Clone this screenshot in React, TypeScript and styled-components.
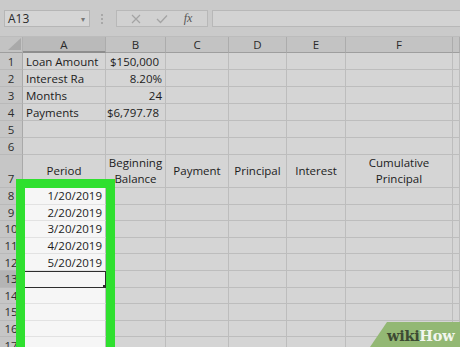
import React from "react";
import styled, { createGlobalStyle } from "styled-components";

const GlobalStyle = createGlobalStyle`
  body {
    margin: 0;
    background: #cfcfcf;
    font-family: "Open Sans", "Liberation Sans", sans-serif;
  }
`;

type Align = "left" | "right" | "center";

type CellData = {
  text?: string;
  align?: Align;
  pad?: number;
};

const columns = ["A", "B", "C", "D", "E", "F", ""];
const colWidths = "23px 83px 60px 63px 58px 59px 107px 1fr";

const topRows: CellData[][] = [
  [{ text: "Loan Amount" }, { text: "$150,000", align: "right", pad: 6 }],
  [{ text: "Interest Ra" }, { text: "8.20%", align: "right" }],
  [{ text: "Months" }, { text: "24", align: "right" }],
  [{ text: "Payments" }, { text: "$6,797.78", align: "right", pad: 6 }],
  [],
  [],
];

const headings = ["Period", "Beginning\nBalance", "Payment", "Principal", "Interest", "Cumulative\nPrincipal", ""];

const dates = ["1/20/2019", "2/20/2019", "3/20/2019", "4/20/2019", "5/20/2019", "", "", "", "", ""];

export default function App() {
  return (
    <Page>
      <GlobalStyle />
      <Toolbar>
        <NameBox>
          <span>A13</span>
          <Caret>▾</Caret>
        </NameBox>
        <Grip>
          <i />
          <i />
          <i />
        </Grip>
        <ButtonBox>
          <ToolIcon>
            <svg width="10" height="10" viewBox="0 0 10 10">
              <path d="M1 1 L9 9 M9 1 L1 9" stroke="#a4a4a4" strokeWidth="1.2" />
            </svg>
          </ToolIcon>
          <ToolIcon>
            <svg width="12" height="10" viewBox="0 0 12 10">
              <path d="M1 5 L4.5 8.5 L11 1.5" stroke="#a4a4a4" strokeWidth="1.3" fill="none" />
            </svg>
          </ToolIcon>
          <Fx>fx</Fx>
        </ButtonBox>
        <FormulaInput />
      </Toolbar>

      <Sheet>
        <Corner>
          <svg width="13" height="12" viewBox="0 0 13 12">
            <path d="M13 0 L13 12 L0 12 Z" fill="#a9a9a9" />
          </svg>
        </Corner>
        {columns.map((c, i) => (
          <ColHeader key={"h" + i} $active={c === "A"}>
            {c}
          </ColHeader>
        ))}

        {topRows.map((row, r) => (
          <React.Fragment key={"r" + r}>
            <RowHeader>{r + 1}</RowHeader>
            {columns.map((_, c) => {
              const cell = row[c];
              return (
                <Cell key={c} $align={cell?.align ?? "left"} $pad={cell?.pad ?? 3}>
                  {cell?.text}
                </Cell>
              );
            })}
          </React.Fragment>
        ))}

        <RowHeader $tall>7</RowHeader>
        {headings.map((h, c) => (
          <HeadCell key={"t" + c}>{h}</HeadCell>
        ))}

        {dates.map((d, r) => (
          <React.Fragment key={"d" + r}>
            <RowHeader $active={r + 8 === 13}>{r + 8}</RowHeader>
            {columns.map((_, c) =>
              c === 0 ? (
                <Cell key={c} $align="right" $pad={3} $white $selected={r + 8 === 13}>
                  {d}
                  {r + 8 === 13 && <Handle />}
                </Cell>
              ) : (
                <Cell key={c} $align="left" $pad={3} />
              )
            )}
          </React.Fragment>
        ))}
      </Sheet>

      <Highlight />

      <Logo>
        <svg width="90" height="25" viewBox="0 0 90 25">
          <path d="M17 0 L90 0 L90 25 L0 25 Z" fill="#93b874" />
        </svg>
        <LogoText>
          <Wiki>wiki</Wiki>
          <How>How</How>
        </LogoText>
      </Logo>
    </Page>
  );
}

const Page = styled.div`
  position: relative;
  width: 460px;
  height: 347px;
  overflow: hidden;
  background: #d4d4d4;
`;

const Toolbar = styled.div`
  display: flex;
  align-items: flex-start;
  height: 37px;
  box-sizing: border-box;
  padding: 10px 0 0 4px;
  background: #cacaca;
  border-bottom: 1px solid #bcbcbc;
`;

const NameBox = styled.div`
  display: flex;
  align-items: center;
  justify-content: space-between;
  box-sizing: border-box;
  width: 86px;
  height: 17px;
  padding: 0 4px 0 3px;
  background: #d5d5d5;
  border: 1px solid #b6b6b6;
  font-size: 12px;
  color: #2a2a2a;
`;

const Caret = styled.span`
  font-size: 8px;
  color: #777;
`;

const Grip = styled.div`
  display: flex;
  flex-direction: column;
  gap: 2px;
  margin: 4px 13px 0 11px;

  i {
    display: block;
    width: 2px;
    height: 2px;
    background: #a8a8a8;
  }
`;

const ButtonBox = styled.div`
  display: flex;
  align-items: center;
  justify-content: space-around;
  box-sizing: border-box;
  width: 92px;
  height: 17px;
  padding: 0 6px;
  background: #d1d1d1;
  border: 1px solid #b8b8b8;
`;

const ToolIcon = styled.span`
  display: flex;
  width: 20px;
  justify-content: center;
`;

const Fx = styled.span`
  width: 20px;
  text-align: center;
  font-family: "Liberation Serif", serif;
  font-style: italic;
  font-size: 12px;
  color: #555;
`;

const FormulaInput = styled.div`
  flex: 1;
  height: 17px;
  margin-left: 4px;
  box-sizing: border-box;
  background: #d3d3d3;
  border: 1px solid #b8b8b8;
  border-right: none;
`;

const Sheet = styled.div`
  display: grid;
  grid-template-columns: ${colWidths};
  grid-template-rows: 16px repeat(6, 17px) 33px repeat(10, 16.6px);
  font-size: 11.5px;
  color: #1c1c1c;
`;

const Corner = styled.div`
  display: flex;
  align-items: flex-end;
  justify-content: flex-end;
  padding: 0 1px 2px 0;
  background: #c3c3c3;
  border-right: 1px solid #b0b0b0;
  border-bottom: 1px solid #9e9e9e;
`;

const ColHeader = styled.div<{ $active?: boolean }>`
  display: flex;
  align-items: center;
  justify-content: center;
  box-sizing: border-box;
  background: ${(p) => (p.$active ? "#bababa" : "#c3c3c3")};
  border-right: 1px solid #acacac;
  border-bottom: ${(p) => (p.$active ? "2px solid #8e8e8e" : "1px solid #9e9e9e")};
  font-size: 11.5px;
  color: #2a2a2a;
`;

const RowHeader = styled.div<{ $active?: boolean; $tall?: boolean }>`
  display: flex;
  align-items: ${(p) => (p.$tall ? "flex-end" : "center")};
  justify-content: center;
  box-sizing: border-box;
  padding-bottom: ${(p) => (p.$tall ? "1px" : "0")};
  background: ${(p) => (p.$active ? "#b4b4b4" : "#c6c6c6")};
  border-right: 1px solid #a9a9a9;
  border-bottom: 1px solid #b9b9b9;
  font-size: 11.5px;
  color: #2d2d2d;
`;

const Cell = styled.div<{ $align: Align; $pad: number; $white?: boolean; $selected?: boolean }>`
  position: relative;
  display: flex;
  align-items: center;
  justify-content: ${(p) => (p.$align === "right" ? "flex-end" : p.$align === "center" ? "center" : "flex-start")};
  box-sizing: border-box;
  padding: 0 ${(p) => p.$pad}px;
  white-space: nowrap;
  overflow: visible;
  background: ${(p) => (p.$white ? "#f6f6f6" : "#d5d5d5")};
  border-right: 1px solid #bdbdbd;
  border-bottom: 1px solid ${(p) => (p.$white ? "#e2e2e2" : "#bdbdbd")};
  outline: ${(p) => (p.$selected ? "1.5px solid #2e2e2e" : "none")};
  outline-offset: -1px;
`;

const Handle = styled.span`
  position: absolute;
  right: -2px;
  bottom: -2px;
  width: 4px;
  height: 4px;
  background: #2e2e2e;
`;

const HeadCell = styled.div`
  display: flex;
  align-items: center;
  justify-content: center;
  box-sizing: border-box;
  text-align: center;
  white-space: pre-line;
  line-height: 16px;
  background: #d5d5d5;
  border-right: 1px solid #bdbdbd;
  border-bottom: 1px solid #bdbdbd;
`;

const Highlight = styled.div`
  position: absolute;
  left: 16px;
  top: 179px;
  width: 99px;
  height: 180px;
  box-sizing: border-box;
  border: 9px solid #2fe02f;
  pointer-events: none;
`;

const Logo = styled.div`
  position: absolute;
  right: 0;
  bottom: 0;
  width: 90px;
  height: 25px;

  svg {
    display: block;
  }
`;

const LogoText = styled.div`
  position: absolute;
  left: 17px;
  top: 5px;
  display: flex;
  font-family: "DejaVu Serif", "Liberation Serif", serif;
  font-weight: bold;
  font-size: 14.5px;
  line-height: 17px;
  letter-spacing: -0.3px;
`;

const Wiki = styled.span`
  color: #3d4a33;
`;

const How = styled.span`
  color: #f2f6ee;
`;
